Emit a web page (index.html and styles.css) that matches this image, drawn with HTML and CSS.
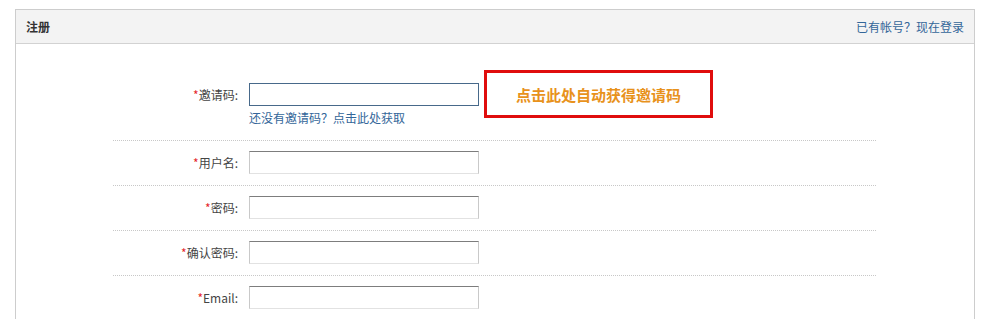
FILE: index.html
```html
<!DOCTYPE html>
<html lang="zh-CN">
<head>
    <meta charset="UTF-8">
    <title>注册</title>
    <link rel="stylesheet" href="styles.css">
</head>
<body>
    <div class="panel">
        <div class="panel-head">
            <h2>注册</h2>
            <a href="#" class="login-link">已有帐号？现在登录</a>
        </div>
        <div class="panel-body">
            <form class="reg-form">
                <div class="row">
                    <label for="invite"><em>*</em>邀请码:</label>
                    <div class="field">
                        <input type="text" id="invite" class="active">
                        <a href="#" class="hint">还没有邀请码？点击此处获取</a>
                    </div>
                    <a href="#" class="auto-get">点击此处自动获得邀请码</a>
                </div>
                <div class="row">
                    <label for="username"><em>*</em>用户名:</label>
                    <div class="field"><input type="text" id="username"></div>
                </div>
                <div class="row">
                    <label for="password"><em>*</em>密码:</label>
                    <div class="field"><input type="password" id="password"></div>
                </div>
                <div class="row">
                    <label for="password2"><em>*</em>确认密码:</label>
                    <div class="field"><input type="password" id="password2"></div>
                </div>
                <div class="row">
                    <label for="email"><em>*</em>Email:</label>
                    <div class="field"><input type="text" id="email"></div>
                </div>
            </form>
        </div>
    </div>
</body>
</html>
```

FILE: styles.css
```css
body {
    margin: 0;
    padding: 9px 0 0 15px;
    background: #fff;
    font-family: "Noto Sans CJK SC", "Noto Sans", sans-serif;
    font-size: 12px;
    color: #333;
    height: 319px;
    overflow: hidden;
    box-sizing: border-box;
}
a {
    color: #336699;
    text-decoration: none;
}
.panel {
    width: 958px;
    border: 1px solid #cdcdcd;
    border-bottom: none;
    height: 400px;
}
.panel-head {
    display: flex;
    justify-content: space-between;
    align-items: center;
    height: 33px;
    padding: 0 10px;
    background: #f3f3f3;
    border-bottom: 1px solid #d2d2d2;
}
.panel-head h2 {
    margin: 0;
    font-size: 12px;
    font-weight: bold;
    color: #333;
}
.panel-body {
    padding-top: 29px;
}
.reg-form {
    width: 763px;
    margin: 0 auto 0 97px;
}
.row {
    display: flex;
    align-items: flex-start;
    padding: 10px 0 11px;
    border-bottom: 1px dotted #c8c8c8;
}
.row label {
    width: 125px;
    text-align: right;
    line-height: 23px;
    margin-right: 11px;
    color: #444;
}
.row label em {
    font-style: normal;
    color: #e5282b;
}
.field {
    display: flex;
    flex-direction: column;
}
.field input {
    width: 230px;
    height: 23px;
    box-sizing: border-box;
    margin: 0;
    padding: 2px 4px;
    border: 1px solid #c9c9c9;
    border-top-color: #7d7d7d;
    border-bottom-color: #e2e2e2;
    font-size: 12px;
    outline: none;
}
.field input.active {
    border: 1px solid #47698a;
}
.hint {
    margin: 4px 0 3px;
    line-height: 16px;
}
.auto-get {
    display: flex;
    align-items: center;
    justify-content: center;
    width: 223px;
    height: 42px;
    margin: -13px 0 0 5px;
    border: 3px solid #e00d0d;
    color: #e8921c;
    font-size: 15px;
    font-weight: bold;
}
```
